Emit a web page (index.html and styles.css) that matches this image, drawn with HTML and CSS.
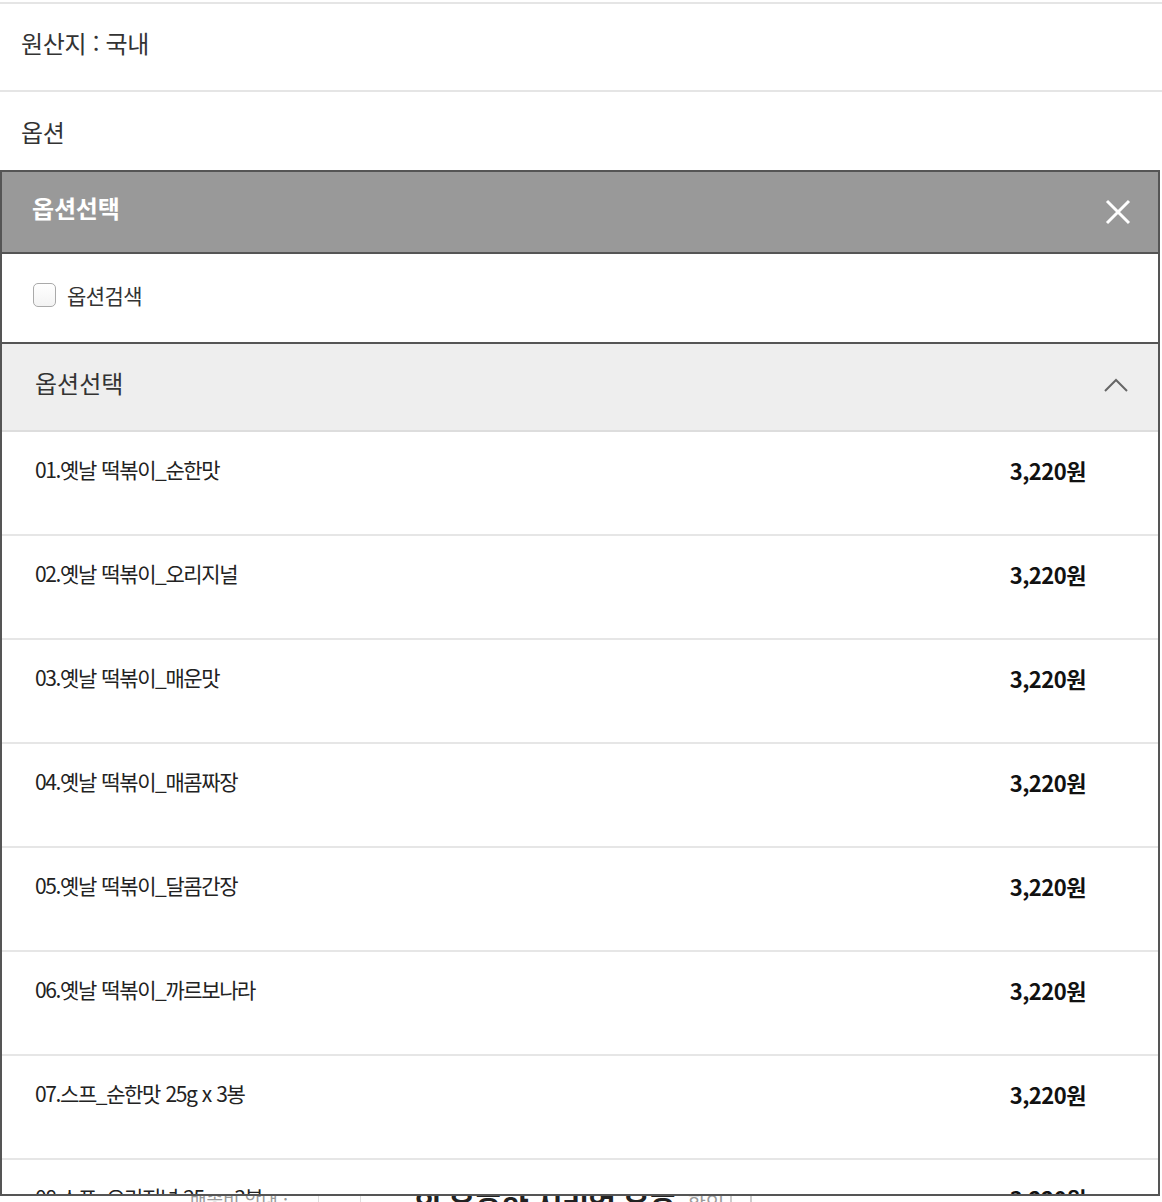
FILE: index.html
```html
<!DOCTYPE html>
<html lang="ko">
<head>
<meta charset="utf-8">
<title>옵션선택</title>
<link rel="stylesheet" href="styles.css">
</head>
<body>
<div class="page">
  <div class="attr attr-first"><span class="attr-text">원산지 : 국내</span></div>
  <div class="attr attr-option"><span class="attr-text">옵션</span></div>

  <div class="panel">
    <div class="panel-head">
      <span class="panel-title">옵션선택</span>
      <svg class="close" width="26" height="26" viewBox="0 0 26 26"><path d="M2 2 L24 24 M24 2 L2 24" stroke="#fff" stroke-width="3" fill="none"/></svg>
    </div>
    <div class="search">
      <span class="checkbox"></span>
      <span class="search-label">옵션검색</span>
    </div>
    <div class="section">
      <span class="section-title">옵션선택</span>
      <svg class="caret" width="24" height="14" viewBox="0 0 24 14"><path d="M1 13 L12 2 L23 13" stroke="#666" stroke-width="2" fill="none"/></svg>
    </div>
    <ul class="items">
      <li class="item"><span class="name">01.옛날 떡볶이_순한맛</span><span class="price">3,220원</span></li>
      <li class="item"><span class="name">02.옛날 떡볶이_오리지널</span><span class="price">3,220원</span></li>
      <li class="item"><span class="name">03.옛날 떡볶이_매운맛</span><span class="price">3,220원</span></li>
      <li class="item"><span class="name">04.옛날 떡볶이_매콤짜장</span><span class="price">3,220원</span></li>
      <li class="item"><span class="name">05.옛날 떡볶이_달콤간장</span><span class="price">3,220원</span></li>
      <li class="item"><span class="name">06.옛날 떡볶이_까르보나라</span><span class="price">3,220원</span></li>
      <li class="item"><span class="name">07.스프_순한맛 25g x 3봉</span><span class="price">3,220원</span></li>
      <li class="item"><span class="name">08.스프_오리지널 25g x 3봉</span><span class="price">3,220원</span></li>
    </ul>
  </div>

  <div class="under">
    <span class="under-gray">배송비 안내 ·</span>
    <span class="under-sep"></span>
    <span class="under-sep"></span>
    <span class="under-bold">외 유효한 시리얼 유효</span>
    <span class="under-light">확인</span>
    <span class="under-icon"></span>
  </div>
</div>
</body>
</html>
```

FILE: styles.css
```css
* { box-sizing: border-box; }
html, body { margin: 0; padding: 0; background: #fff; }
body {
  font-family: "Noto Sans CJK KR", "Noto Sans", sans-serif;
  color: #333;
  width: 1162px;
  height: 1202px;
  overflow: hidden;
}
.page { width: 1162px; }

.attr {
  display: flex;
  align-items: center;
  padding-left: 21px;
  border-bottom: 2px solid #e5e5e5;
}
.attr-first {
  margin-top: 2px;
  border-top: 2px solid #e5e5e5;
  height: 90px;
  padding-bottom: 8px;
}
.attr-option {
  height: 78px;
  border-bottom: none;
  padding-top: 2px;
}
.attr-text {
  font-size: 24px;
  letter-spacing: -0.3px;
  color: #333;
  line-height: 30px;
}

.panel {
  position: relative;
  z-index: 2;
  width: 1160px;
  height: 1026px;
  border: 2px solid #555;
  background: #fff;
  overflow: hidden;
}
.panel-head {
  height: 82px;
  background: #999;
  border-bottom: 2px solid #555;
  display: flex;
  align-items: center;
  justify-content: space-between;
  padding: 0 27px 0 30px;
}
.panel-title {
  color: #fff;
  font-size: 24px;
  font-weight: 700;
  letter-spacing: -0.2px;
  line-height: 30px;
  margin-top: -8px;
}
.close { display: block; }

.search {
  height: 90px;
  border-bottom: 2px solid #555;
  display: flex;
  align-items: center;
  padding-left: 31px;
  padding-bottom: 7px;
}
.checkbox {
  width: 23px;
  height: 24px;
  border: 1px solid #aaa;
  border-radius: 5px;
  background: linear-gradient(#fff, #f3f3f3);
}
.search-label {
  margin-left: 11px;
  font-size: 21px;
  letter-spacing: -0.6px;
  color: #333;
  line-height: 28px;
}

.section {
  height: 88px;
  background: #eee;
  border-bottom: 2px solid #ddd;
  display: flex;
  align-items: center;
  justify-content: space-between;
  padding: 0 30px 0 33px;
  padding-bottom: 8px;
}
.section-title {
  font-size: 24px;
  letter-spacing: 0;
  color: #333;
  line-height: 30px;
}
.caret { display: block; margin-top: 4px; }

.items { list-style: none; margin: 0; padding: 0; }
.item {
  height: 104px;
  border-bottom: 2px solid #e6e6e6;
  display: flex;
  justify-content: space-between;
  align-items: flex-start;
  padding: 22px 72px 0 33px;
}
.name {
  font-size: 21px;
  letter-spacing: -1.4px;
  word-spacing: 1px;
  color: #222;
  line-height: 30px;
}
.price {
  font-size: 22px;
  font-weight: 700;
  letter-spacing: -0.5px;
  color: #111;
  line-height: 30px;
  margin-top: 1px;
}

.under {
  position: relative;
  z-index: 1;
  margin-top: -12px;
  height: 40px;
  display: flex;
  align-items: flex-start;
  padding-left: 190px;
}
.under-gray { font-size: 18px; color: #999; line-height: 24px; margin-top: 2px; width: 120px; }
.under-sep { width: 1px; height: 30px; background: #ddd; margin-left: 8px; margin-right: 33px; }
.under-bold { font-size: 30px; font-weight: 700; color: #222; line-height: 36px; letter-spacing: -1px; margin-left: 20px; }
.under-light { font-size: 20px; color: #999; line-height: 30px; margin-left: 12px; margin-top: 4px; }
.under-icon { width: 22px; height: 22px; border: 2px solid #ccc; margin-left: 6px; margin-top: 8px; }
```
